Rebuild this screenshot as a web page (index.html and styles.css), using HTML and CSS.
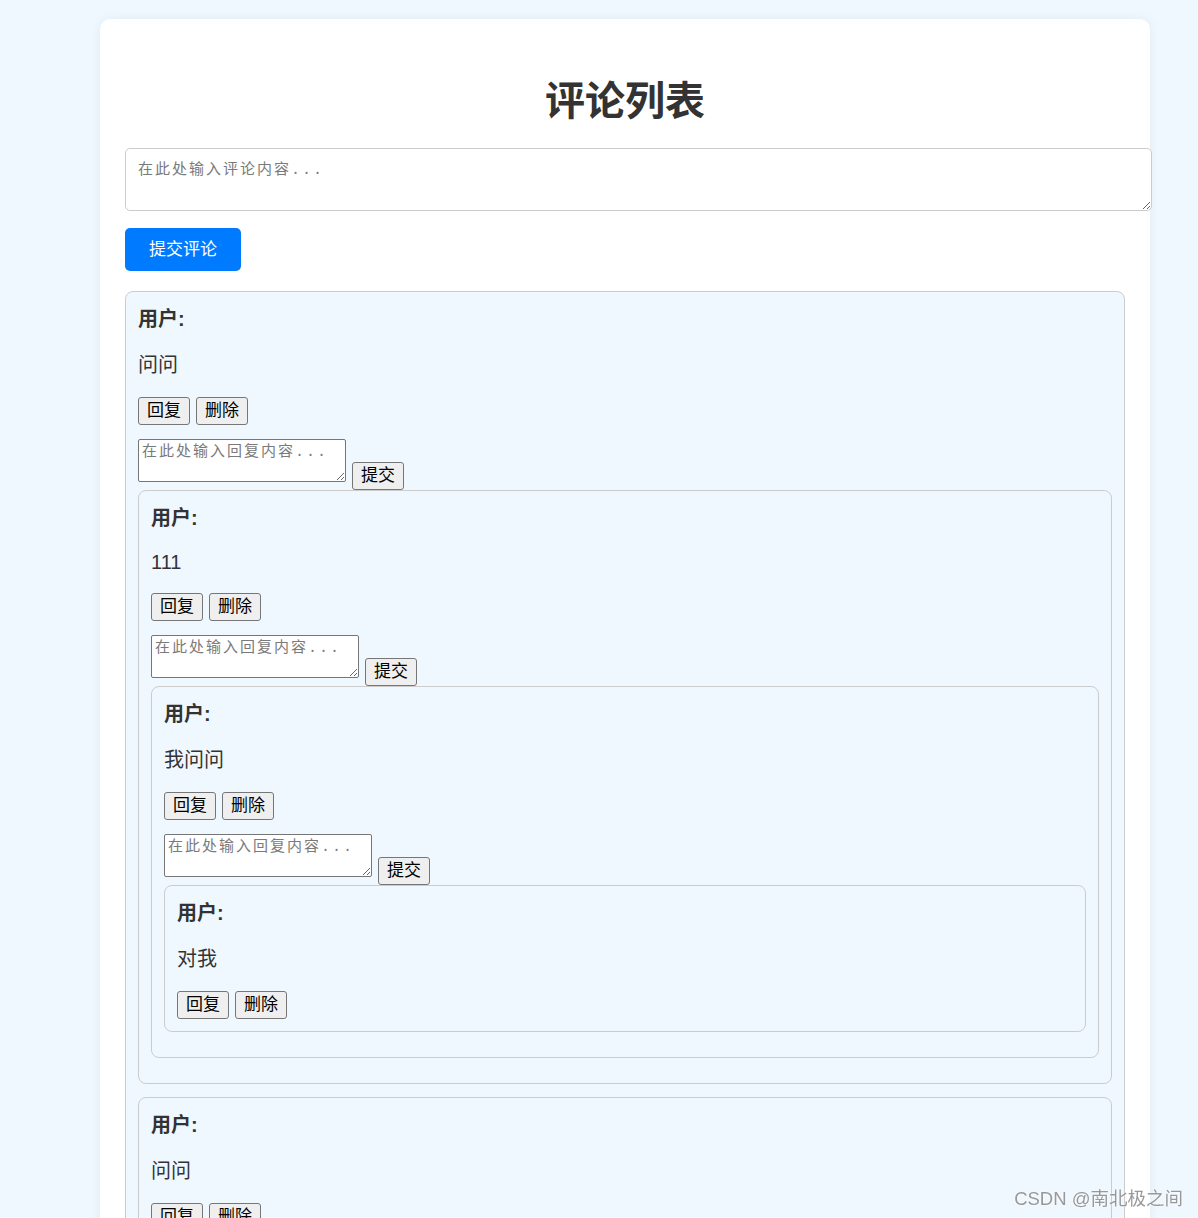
FILE: index.html
```html
<!DOCTYPE html>
<html lang="zh-CN">
<head>
    <meta charset="UTF-8">
    <meta name="viewport" content="width=device-width, initial-scale=1.0">
    <title>评论列表</title>
    <link rel="stylesheet" href="styles.css">
</head>
<body>
    <div class="container">
        <h1 class="title">评论列表</h1>

        <div class="new-comment">
            <textarea id="commentInput" placeholder="在此处输入评论内容..."></textarea>
            <button class="submit-button">提交评论</button>
        </div>

        <div class="comment-list">
            <div class="comment">
                <strong class="user">用户:</strong>
                <p class="content">问问</p>
                <div class="actions">
                    <button>回复</button>
                    <button>删除</button>
                </div>
                <div class="reply-form">
                    <textarea placeholder="在此处输入回复内容..."></textarea>
                    <button>提交</button>
                </div>
                <div class="replies">
                    <div class="comment">
                        <strong class="user">用户:</strong>
                        <p class="content latin">111</p>
                        <div class="actions">
                            <button>回复</button>
                            <button>删除</button>
                        </div>
                        <div class="reply-form">
                            <textarea placeholder="在此处输入回复内容..."></textarea>
                            <button>提交</button>
                        </div>
                        <div class="replies">
                            <div class="comment">
                                <strong class="user">用户:</strong>
                                <p class="content">我问问</p>
                                <div class="actions">
                                    <button>回复</button>
                                    <button>删除</button>
                                </div>
                                <div class="reply-form">
                                    <textarea placeholder="在此处输入回复内容..."></textarea>
                                    <button>提交</button>
                                </div>
                                <div class="replies">
                                    <div class="comment">
                                        <strong class="user">用户:</strong>
                                        <p class="content">对我</p>
                                        <div class="actions">
                                            <button>回复</button>
                                            <button>删除</button>
                                        </div>
                                    </div>
                                </div>
                            </div>
                        </div>
                    </div>

                    <div class="comment">
                        <strong class="user">用户:</strong>
                        <p class="content">问问</p>
                        <div class="actions">
                            <button>回复</button>
                            <button>删除</button>
                        </div>
                        <div class="reply-form">
                            <textarea placeholder="在此处输入回复内容..."></textarea>
                            <button>提交</button>
                        </div>
                    </div>
                </div>
            </div>
        </div>
    </div>

    <div class="watermark">CSDN @南北极之间</div>
</body>
</html>
```

FILE: styles.css
```css
body {
    margin: 0;
    background-color: #f0f8ff;
    font-family: "Liberation Sans", "Noto Sans CJK SC", sans-serif;
    color: #333;
}
.container {
    width: 1000px;
    margin: 19px 0 40px 100px;
    padding: 25px;
    background: #ffffff;
    border-radius: 10px;
    box-shadow: 0 0 12px rgba(0, 0, 0, 0.06);
}
.title {
    text-align: center;
    font-size: 40px;
    line-height: 54px;
    margin: 30px 0 20px;
    color: #333;
}
textarea {
    font-family: "Liberation Mono", "Noto Sans CJK SC", monospace;
    font-size: 15px;
    letter-spacing: 2px;
    line-height: 20px;
    color: #333;
}
textarea::placeholder {
    color: #7a7a7a;
}
.new-comment textarea {
    display: block;
    width: 100%;
    height: 39px;
    padding: 12px 13px 10px 12px;
    margin: 0 0 17px;
    border: 1px solid #ccc;
    border-radius: 5px;
}
.submit-button {
    display: block;
    padding: 12px 24px;
    font-family: "Liberation Sans", "Noto Sans CJK SC", sans-serif;
    font-size: 17px;
    line-height: 19px;
    color: #fff;
    background-color: #007bff;
    border: none;
    border-radius: 5px;
    cursor: pointer;
}
.comment-list {
    margin-top: 20px;
}
.comment {
    padding: 13px 12px 12px;
    margin-bottom: 13px;
    background-color: #f0f8ff;
    border: 1px solid #ccc;
    border-radius: 8px;
}
.user {
    display: block;
    font-size: 20px;
    line-height: 28px;
}
.content {
    margin: 18px 0;
    font-size: 20px;
    line-height: 28px;
}
.content.latin {
    line-height: 25px;
}
.actions, .reply-form {
    display: flex;
    gap: 6px;
}
.actions button, .reply-form button {
    padding: 2px 8px;
    font-family: "Liberation Sans", "Noto Sans CJK SC", sans-serif;
    font-size: 17px;
    line-height: 22px;
    color: #000;
    background-color: #efefef;
    border: 1px solid #767676;
    border-radius: 3px;
}
.reply-form {
    align-items: flex-start;
    margin-top: 14px;
}
.reply-form textarea {
    box-sizing: border-box;
    width: 208px;
    height: 43px;
    margin: 0;
    padding: 3px 3px;
    border: 1px solid #767676;
    border-radius: 2px;
}
.reply-form button {
    margin-top: 23px;
}
.watermark {
    position: fixed;
    right: 15px;
    bottom: 8px;
    font-size: 18.5px;
    color: #999;
    text-shadow: 0 0 2px #fff;
}
```
